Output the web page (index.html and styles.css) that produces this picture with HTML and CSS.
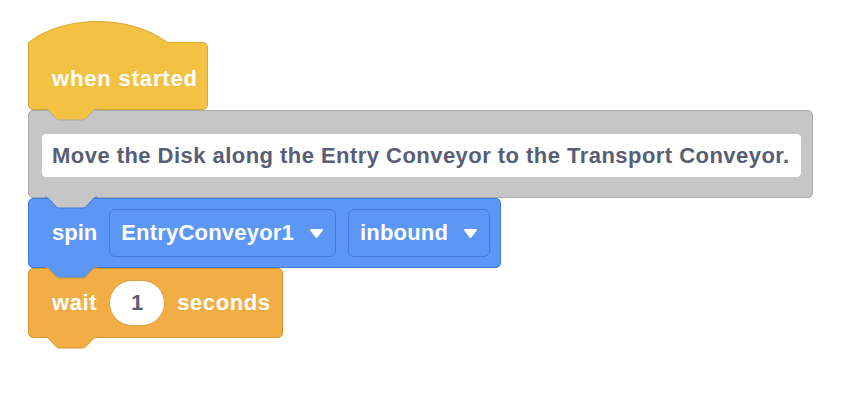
FILE: index.html
```html
<!DOCTYPE html>
<html lang="en">
<head>
  <meta charset="UTF-8" />
  <title>Script</title>
  <link rel="stylesheet" href="styles.css">
</head>
<body>
  <div class="script">
    <div class="block hat">
      <svg class="cap" width="140" height="22" viewBox="0 0 140 22">
        <path d="M0.5,22 L0.5,21.5 C36,-6.5 103,-6.5 139.5,21.5 L139.5,22" />
      </svg>
      <div class="hat-body">
        <span class="label hat-label">when started</span>
        <svg class="tab" width="54" height="13" viewBox="0 0 54 13">
          <path d="M0,0 C2,0 3,1 4.5,2.5 L10.5,9 C11.5,10 12.5,11 14.5,11 H37.5 C39.5,11 40.5,10 41.5,9 L47.5,2.5 C49,1 50,0 52,0" />
        </svg>
      </div>
    </div>

    <div class="block comment">
      <div class="note">Move the Disk along the Entry Conveyor to the Transport Conveyor.</div>
      <svg class="tab" width="54" height="13" viewBox="0 0 54 13">
        <path d="M0,0 C2,0 3,1 4.5,2.5 L10.5,9 C11.5,10 12.5,11 14.5,11 H37.5 C39.5,11 40.5,10 41.5,9 L47.5,2.5 C49,1 50,0 52,0" />
      </svg>
    </div>

    <div class="block spin">
      <span class="label spin-label">spin</span>
      <div class="dropdown">
        <span>EntryConveyor1</span>
        <svg class="arrow" width="13" height="9" viewBox="0 0 13 9"><path d="M1,1 H12 L6.5,8 Z" /></svg>
      </div>
      <div class="dropdown">
        <span>inbound</span>
        <svg class="arrow" width="13" height="9" viewBox="0 0 13 9"><path d="M1,1 H12 L6.5,8 Z" /></svg>
      </div>
      <svg class="tab" width="54" height="13" viewBox="0 0 54 13">
        <path d="M0,0 C2,0 3,1 4.5,2.5 L10.5,9 C11.5,10 12.5,11 14.5,11 H37.5 C39.5,11 40.5,10 41.5,9 L47.5,2.5 C49,1 50,0 52,0" />
      </svg>
    </div>

    <div class="block wait">
      <span class="label">wait</span>
      <div class="number">1</div>
      <span class="label">seconds</span>
      <svg class="tab" width="54" height="13" viewBox="0 0 54 13">
        <path d="M0,0 C2,0 3,1 4.5,2.5 L10.5,9 C11.5,10 12.5,11 14.5,11 H37.5 C39.5,11 40.5,10 41.5,9 L47.5,2.5 C49,1 50,0 52,0" />
      </svg>
    </div>
  </div>
</body>
</html>
```

FILE: styles.css
```css
body {
  margin: 0;
  background: #fff;
  font-family: 'Liberation Sans', Arial, sans-serif;
  font-weight: bold;
  font-size: 22px;
}
.script {
  display: flex;
  flex-direction: column;
  align-items: flex-start;
  padding: 21px 0 40px 28px;
}
.block {
  position: relative;
  box-sizing: border-box;
}
.label {
  color: #fff;
  letter-spacing: 0.6px;
  white-space: nowrap;
}
.hat-label {
  letter-spacing: 0.85px;
}
.spin-label {
  letter-spacing: 0;
}

/* the tab under a block sits in the notch of the next one,
   so its outline takes the next block's border colour */
.tab {
  display: block;
  position: absolute;
  left: 16px;
  top: 100%;
  z-index: 2;
  overflow: visible;
}
.tab path {
  stroke-width: 1;
}

/* hat */
.hat {
  display: flex;
  flex-direction: column;
}
.cap {
  display: block;
  position: relative;
  z-index: 1;
  margin-bottom: -1px;
}
.cap path {
  fill: #f4c243;
  stroke: #d7a935;
}
.hat .tab path {
  fill: #f4c243;
  stroke: #a9a9a9;
}
.hat-body {
  position: relative;
  box-sizing: border-box;
  height: 68px;
  display: flex;
  align-items: center;
  padding: 6px 9px 0 23px;
  background: #f4c243;
  border: 1px solid #d7a935;
  border-radius: 0 5px 5px 5px;
}

/* comment */
.comment {
  width: 785px;
  height: 88px;
  padding: 22px 10px 19px 12px;
  background: #c6c6c6;
  border: 1px solid #a9a9a9;
  border-radius: 5px;
}
.comment .tab path {
  fill: #c6c6c6;
  stroke: #4078d8;
}
.note {
  box-sizing: border-box;
  height: 45px;
  display: flex;
  align-items: center;
  padding-left: 10px;
  background: #fff;
  border: 1px solid #c9c9c9;
  border-radius: 5px;
  color: #575e75;
  letter-spacing: 0.46px;
  white-space: nowrap;
}

/* spin */
.spin {
  height: 70px;
  display: flex;
  align-items: center;
  gap: 12px;
  padding: 0 10px 0 23px;
  background: #5c97f5;
  border: 1px solid #4078d8;
  border-radius: 5px;
}
.spin .tab path {
  fill: #5c97f5;
  stroke: #d5952f;
}
.dropdown {
  box-sizing: border-box;
  height: 48px;
  display: flex;
  align-items: center;
  gap: 16px;
  padding: 0 12px 0 11px;
  border: 1px solid #4679d9;
  border-radius: 6px;
  color: #fff;
  letter-spacing: 0.2px;
}
.arrow path {
  fill: #fff;
  stroke: #fff;
  stroke-width: 2;
  stroke-linejoin: round;
}

/* wait */
.wait {
  height: 70px;
  display: flex;
  align-items: center;
  gap: 12px;
  padding: 0 11px 0 23px;
  background: #f2ae45;
  border: 1px solid #d5952f;
  border-radius: 5px;
}
.wait .tab path {
  fill: #f2ae45;
  stroke: #d5952f;
}
.number {
  box-sizing: border-box;
  width: 56px;
  height: 46px;
  display: flex;
  align-items: center;
  justify-content: center;
  background: #fff;
  border: 1px solid #d9a04a;
  border-radius: 23px;
  color: #575e75;
}
```
